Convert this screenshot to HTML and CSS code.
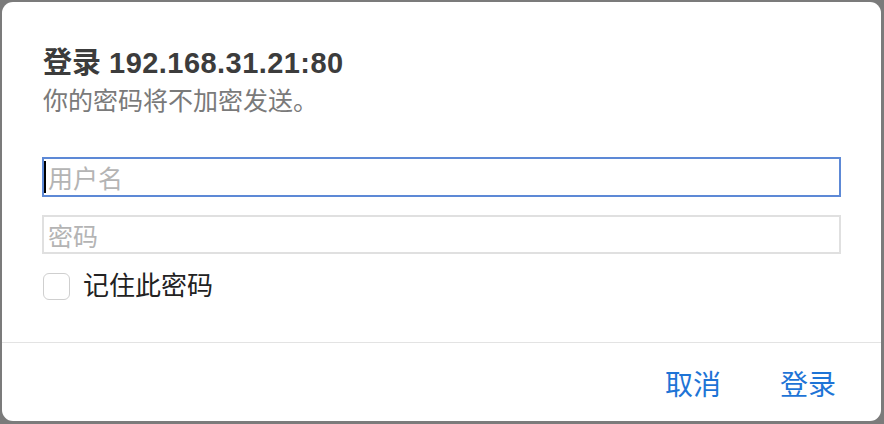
FILE: index.html
```html
<!DOCTYPE html>
<html lang="zh">
<head>
<meta charset="utf-8">
<link rel="stylesheet" href="styles.css">
</head>
<body>
<div class="dialog">
  <div class="content">
    <h1 class="title">登录 <span class="host">192.168.31.21:80</span></h1>
    <p class="subtitle">你的密码将不加密发送。</p>
    <div class="field field-focus">
      <span class="caret"></span>
      <input class="input" type="text" placeholder="用户名">
    </div>
    <div class="field">
      <input class="input" type="password" placeholder="密码">
    </div>
    <label class="remember">
      <span class="checkbox"></span>
      <span class="remember-text">记住此密码</span>
    </label>
  </div>
  <div class="footer">
    <button class="btn">取消</button>
    <button class="btn">登录</button>
  </div>
</div>
</body>
</html>
```
FILE: styles.css
```css
html, body {
  margin: 0;
  padding: 0;
  background: #7b7b7b;
  width: 884px;
  height: 424px;
  overflow: hidden;
}
body {
  font-family: "Liberation Sans", "Noto Sans CJK SC", sans-serif;
}
.dialog {
  margin: 2px 3px 3px 2px;
  height: 419px;
  background: #ffffff;
  border-radius: 11px;
  display: flex;
  flex-direction: column;
  box-sizing: border-box;
}
.content {
  padding: 44px 40px 0 40px;
  flex: 1;
  display: flex;
  flex-direction: column;
}
.title {
  margin: 0 0 0 1px;
  font-size: 29px;
  line-height: 35px;
  font-weight: bold;
  color: #3c3c3c;
}
.host {
  letter-spacing: 0.45px;
}
.subtitle {
  margin: 5px 0 0 1px;
  font-size: 25px;
  line-height: 30px;
  color: #7a7a7a;
}
.field {
  position: relative;
  margin-top: 41px;
  height: 40px;
  border: 2px solid #e0e0e0;
  box-sizing: border-box;
  display: flex;
}
.field + .field {
  margin-top: 18px;
  height: 39px;
}
.field-focus {
  border-color: #5d89d6;
}
.caret {
  position: absolute;
  left: 0;
  top: 2px;
  width: 2px;
  height: 32px;
  background: #000;
}
.input {
  flex: 1;
  border: none;
  outline: none;
  padding: 0 0 0 4px;
  margin: 0;
  font-family: "Noto Sans CJK SC", sans-serif;
  font-size: 25px;
  background: transparent;
}
.input::placeholder {
  color: #b4b4b4;
}
.remember {
  margin-top: 17px;
  display: flex;
  align-items: center;
  gap: 13px;
}
.checkbox {
  width: 27px;
  height: 27px;
  box-sizing: border-box;
  border: 1px solid #cfcfcf;
  border-radius: 6px;
  background: #fff;
  margin-left: 1px;
}
.remember-text {
  font-size: 26px;
  line-height: 30px;
  color: #222;
}
.footer {
  border-top: 1px solid #e3e3e3;
  height: 79px;
  box-sizing: border-box;
  display: flex;
  justify-content: flex-end;
  align-items: center;
  gap: 59px;
  padding: 2px 45px 0 0;
}
.btn {
  border: none;
  background: none;
  padding: 0;
  font-family: "Noto Sans CJK SC", sans-serif;
  font-size: 28px;
  line-height: 32px;
  color: #1e74d6;
}
```
